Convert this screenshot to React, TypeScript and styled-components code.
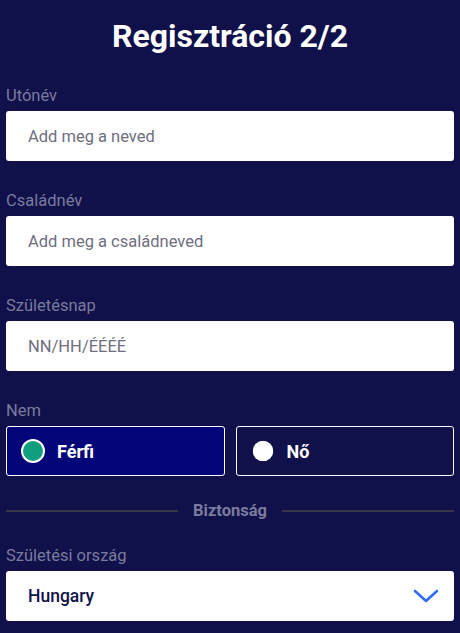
import React, { useState } from 'react'
import styled, { createGlobalStyle } from 'styled-components'

const GlobalStyle = createGlobalStyle`
    html, body {
        margin: 0;
        padding: 0;
        background: #10104a;
    }
    * {
        box-sizing: border-box;
    }
`

const Page = styled.div`
    min-height: 633px;
    background: #10104a;
    padding: 17px 6px 0;
    font-family: Roboto, "Liberation Sans", sans-serif;
`

const Title = styled.h1`
    margin: 0 0 30px;
    text-align: center;
    color: #fff;
    font-size: 32px;
    font-weight: 700;
    line-height: 39px;
`

const Field = styled.div`
    display: flex;
    flex-direction: column;
    margin-bottom: 30px;
`

const Label = styled.label`
    color: #7b7b9c;
    font-size: 16.5px;
    line-height: 20px;
    margin-bottom: 5px;
`

const Input = styled.input`
    height: 50px;
    width: 100%;
    border: none;
    border-radius: 3px;
    background: #fff;
    padding: 0 22px;
    font-family: inherit;
    font-size: 16.5px;
    color: #111;
    outline: none;

    &::placeholder {
        color: #6e6e80;
    }
`

const RadioRow = styled.div`
    display: grid;
    grid-template-columns: 1fr 1fr;
    gap: 11px;
`

const RadioBox = styled.button<{ $active?: boolean }>`
    height: 50px;
    display: flex;
    align-items: center;
    padding: 0 0 0 14px;
    border: 1px solid #fff;
    border-radius: 3px;
    background: ${p => (p.$active ? '#05057a' : 'transparent')};
    color: #fff;
    font-family: inherit;
    font-size: 18px;
    font-weight: 700;
    cursor: pointer;
`

const Dot = styled.span<{ $active?: boolean }>`
    width: 24px;
    height: 24px;
    margin-right: 12px;
    border-radius: 50%;
    flex-shrink: 0;
    background: ${p => (p.$active ? '#0f9f7f' : '#fff')};
    border: ${p => (p.$active ? '2px solid #fff' : '2px solid transparent')};
    transform: ${p => (p.$active ? 'none' : 'scale(0.86)')};
`

const Divider = styled.div`
    display: flex;
    align-items: center;
    gap: 15px;
    margin: 25px 0 25px;
    color: #7b7b9c;
    font-size: 16.5px;
    font-weight: 700;
    line-height: 20px;

    &::before,
    &::after {
        content: '';
        flex: 1;
        height: 2px;
        background: #38384a;
    }
`

const Select = styled.div`
    height: 50px;
    display: flex;
    align-items: center;
    justify-content: space-between;
    padding: 0 15px 0 22px;
    border-radius: 3px;
    background: #fff;
    color: #12124a;
    font-size: 17.5px;
    font-weight: 500;
`

const Chevron = () => (
    <svg width="26" height="16" viewBox="0 0 26 16" fill="none">
        <path d="M2 3l11 10L24 3" stroke="#2f6df6" strokeWidth="2.6" strokeLinecap="round" strokeLinejoin="round" />
    </svg>
)

const App = () => {
    const [gender, setGender] = useState<'m' | 'f'>('m')

    return (
        <Page>
            <GlobalStyle />
            <Title>Regisztráció 2/2</Title>

            <Field>
                <Label>Utónév</Label>
                <Input placeholder="Add meg a neved" />
            </Field>
            <Field>
                <Label>Családnév</Label>
                <Input placeholder="Add meg a családneved" />
            </Field>
            <Field>
                <Label>Születésnap</Label>
                <Input placeholder="NN/HH/ÉÉÉÉ" />
            </Field>

            <Field style={{ marginBottom: 0 }}>
                <Label>Nem</Label>
                <RadioRow>
                    <RadioBox $active={gender === 'm'} onClick={() => setGender('m')}>
                        <Dot $active={gender === 'm'} />
                        <span>Férfi</span>
                    </RadioBox>
                    <RadioBox $active={gender === 'f'} onClick={() => setGender('f')}>
                        <Dot $active={gender === 'f'} />
                        <span>Nő</span>
                    </RadioBox>
                </RadioRow>
            </Field>

            <Divider>Biztonság</Divider>

            <Field>
                <Label>Születési ország</Label>
                <Select>
                    Hungary
                    <Chevron />
                </Select>
            </Field>
        </Page>
    )
}

export default App
